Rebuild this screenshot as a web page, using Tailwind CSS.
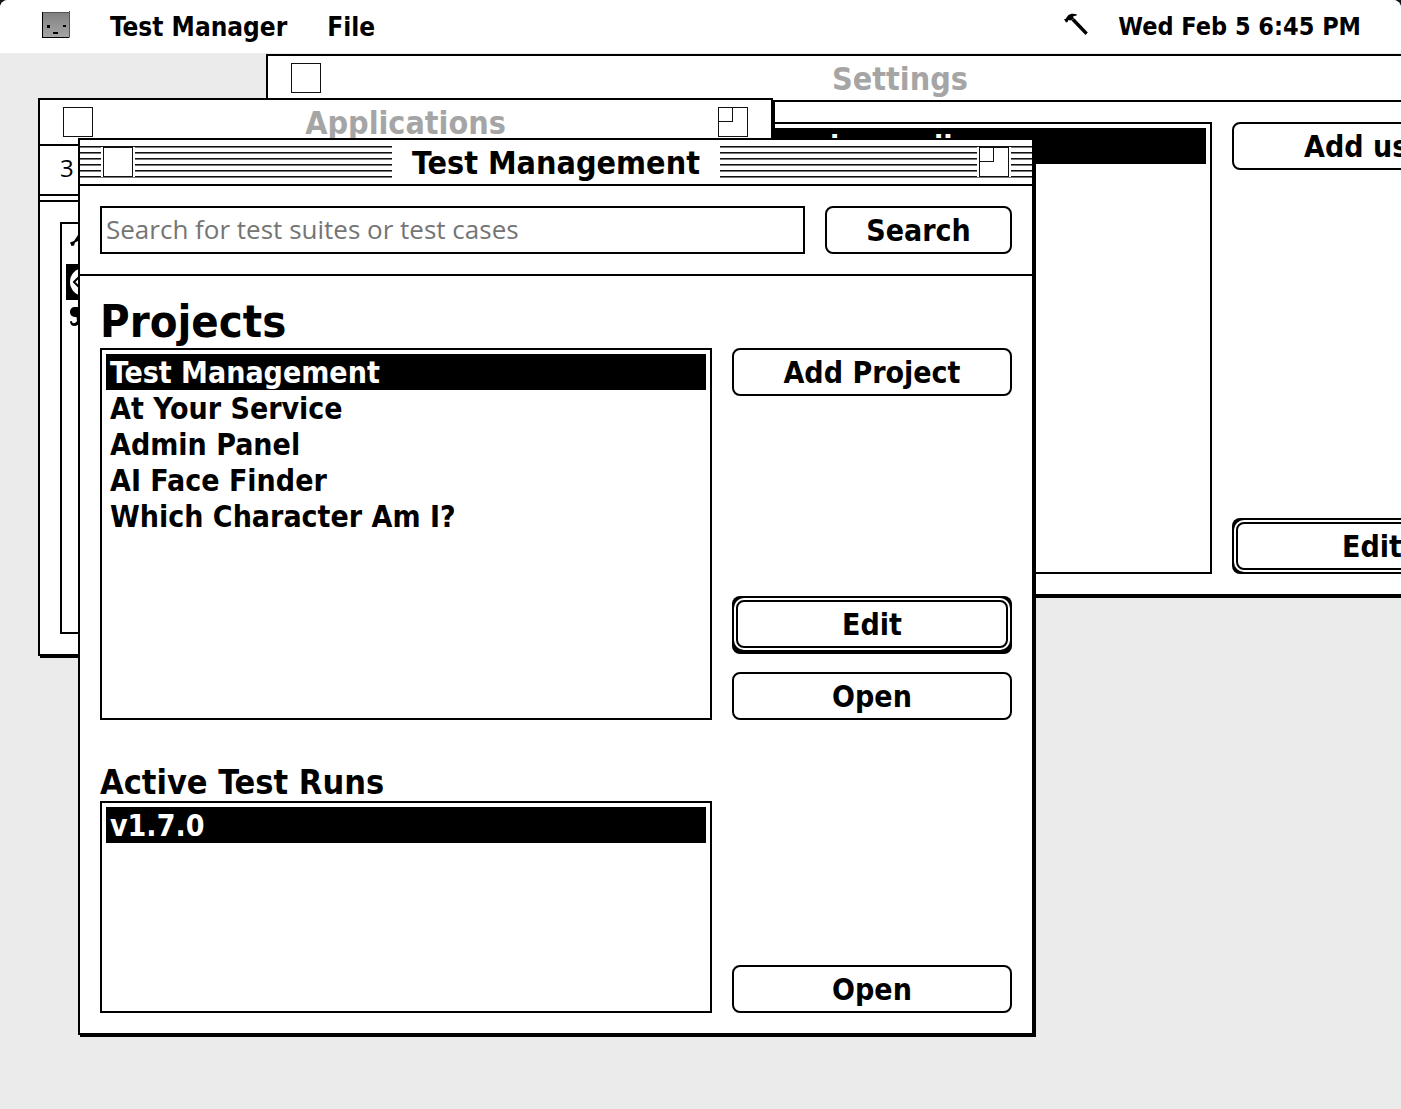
<!DOCTYPE html>
<html lang="en">
<head>
<meta charset="utf-8">
<title>Test Manager</title>
<script src="https://cdn.jsdelivr.net/npm/@tailwindcss/browser@4"></script>
</head>
<body class="bg-[#14141c]">
<div class="relative min-h-screen overflow-hidden rounded-t-lg bg-[#ebebeb] font-['DejaVu_Sans_Condensed','DejaVu_Sans',sans-serif] text-[30px] leading-[38px] font-bold text-black">

  <header class="flex h-[53px] items-center bg-white pr-10 pl-[42px] text-[26px]">
    <svg class="mr-10 mb-1 h-7 w-7" viewBox="0 0 28 28" aria-hidden="true">
      <defs><linearGradient id="face" x1="0" y1="0" x2="0" y2="1"><stop offset="0" stop-color="#808080"/><stop offset="1" stop-color="#a6a6a6"/></linearGradient></defs>
      <rect x="0" y="1" width="28" height="26" fill="url(#face)"/>
      <path d="M.5 1v26M0 26.500h27" stroke="#000" fill="none"/>
      <path d="M27.500 0v26M1 1.500h26" stroke="#555" fill="none"/>
      <path d="M5 14h3v3H5zM21 14h3v2h-3zM11 21h5v2h-5z" fill="#000"/>
    </svg>
    <nav class="flex gap-10">
      <button type="button">Test Manager</button>
      <button type="button">File</button>
    </nav>
    <div class="ml-auto flex items-center gap-[30px]">
      <svg class="mb-1 h-6 w-6" viewBox="0 0 24 24" aria-hidden="true">
        <path d="M0 6 1.500 6 4 2.500C6 .5 10 .5 13 1.500L12.500 2.500 9 3.500 10 6 6.500 7.500 4.500 7 3.500 9 2 9.500z"/>
        <path d="M7.500 7.500 10.500 5.500 23.800 19.500 21.500 22z"/>
      </svg>
      <time class="text-[25px]">Wed Feb 5 6:45 PM</time>
    </div>
  </header>

  <section aria-label="Settings" class="absolute top-[54px] left-[266px] w-[1268px] border-2 bg-white shadow-[2px_2px_0_#000]">
    <div class="flex h-[46px] items-center border-b-2 px-[23px]">
      <button type="button" aria-label="Close" class="h-[30px] w-[30px] border border-[#111]"></button>
      <h2 class="flex-1 pt-0.5 pr-[30px] text-center text-[32px] text-[#a5a5a5]">Settings</h2>
    </div>
    <div class="flex h-[492px] gap-5 p-5">
      <ul class="flex-1 border-2 p-1">
        <li><button type="button" class="block h-9 w-full bg-black pl-[536px] text-left text-white">i.roseell</button></li>
      </ul>
      <div class="flex w-[280px] flex-col justify-between">
        <button type="button" class="h-12 rounded-lg border-2 pt-0.5">Add user</button>
        <button type="button" class="rounded-lg bg-black p-[2px]"><span class="block rounded-[10px] bg-white p-[2px]"><span class="block h-12 rounded-lg border-2 leading-[46px]">Edit</span></span></button>
      </div>
    </div>
  </section>

  <section aria-label="Applications" class="absolute top-[98px] left-[38px] w-[735px] border-2 bg-white shadow-[2px_2px_0_#000]">
    <div class="flex h-[46px] items-center border-b-2 px-[23px]">
      <button type="button" aria-label="Close" class="h-[30px] w-[30px] border border-[#111]"></button>
      <h2 class="flex-1 pt-0.5 text-center text-[32px] text-[#a5a5a5]">Applications</h2>
      <button type="button" aria-label="Zoom" class="flex h-[30px] w-[30px] items-start border border-[#111]"><span class="block h-3.5 w-3.5 border-r border-b border-[#111]"></span></button>
    </div>
    <div class="flex h-[50px] items-center border-b-2 px-5 pb-1 font-['Open_Sans',sans-serif] text-[24px] font-normal">3</div>
    <div class="h-1.5 border-b-2"></div>
    <div class="h-[452px] p-5">
      <ul class="h-full border-2 p-1">
        <li class="flex h-9 items-center pl-1">
          <svg class="h-6 w-6" viewBox="0 0 24 24" aria-hidden="true"><path d="M0 8.500 4 7 8 1H16V8L8 7 5 8.500 4 11.500 1.500 12z"/></svg>
        </li>
        <li class="flex h-9 items-center bg-black pl-1">
          <svg class="h-7 w-7" viewBox="0 0 28 28" aria-hidden="true"><circle cx="14" cy="14" r="14" fill="#fff"/><path d="M9 9l-5 5 5 5" fill="none" stroke="#000" stroke-width="2"/></svg>
        </li>
        <li class="flex h-9 items-center pl-1">
          <svg class="h-6 w-6" viewBox="0 0 24 24" aria-hidden="true"><path d="M0 6C0 3 2 1 5 1H12V14C10 18 7 20 4 20 1 20 0 17 0 15.500L2 15C2 18 5 18 7 15L6.500 11C2 11 0 9 0 6z"/></svg>
        </li>
      </ul>
    </div>
  </section>

  <main aria-label="Test Management" class="absolute top-[138px] left-[78px] w-[956px] border-2 bg-white shadow-[2px_2px_0_#000]">
    <div class="flex h-[46px] items-center border-b-2">
      <div class="flex h-8 flex-1 items-center bg-[repeating-linear-gradient(#111_0_1px,#777_1px_2px,#fff_2px_6px)]">
        <div class="ml-[21px] bg-white px-0.5"><button type="button" aria-label="Close" class="block h-[30px] w-[30px] border border-[#111]"></button></div>
      </div>
      <h1 class="px-5 pt-0.5 text-[32px]">Test Management</h1>
      <div class="flex h-8 flex-1 items-center justify-end bg-[repeating-linear-gradient(#111_0_1px,#777_1px_2px,#fff_2px_6px)]">
        <div class="mr-[21px] bg-white px-0.5"><button type="button" aria-label="Zoom" class="flex h-[30px] w-[30px] items-start border border-[#111]"><span class="block h-3.5 w-3.5 border-r border-b border-[#111]"></span></button></div>
      </div>
    </div>

    <form class="flex gap-5 border-b-2 p-5">
      <input type="search" aria-label="Search" placeholder="Search for test suites or test cases" class="h-12 min-w-0 flex-1 border-2 px-1 pb-0.5 font-['Open_Sans',sans-serif] text-[26px] font-normal placeholder:text-[#757575]">
      <button type="button" class="h-12 w-[187px] rounded-lg border-2 pt-0.5">Search</button>
    </form>

    <section class="px-5 pt-[22px]">
      <h2 class="pb-0.5 text-[45px] leading-[48px]">Projects</h2>
      <div class="flex h-[372px] gap-5">
        <ul class="flex-1 border-2 p-1">
          <li><button type="button" class="block h-9 w-full bg-black px-1 text-left text-white">Test Management</button></li>
          <li><button type="button" class="block h-9 w-full px-1 text-left">At Your Service</button></li>
          <li><button type="button" class="block h-9 w-full px-1 text-left">Admin Panel</button></li>
          <li><button type="button" class="block h-9 w-full px-1 text-left">AI Face Finder</button></li>
          <li><button type="button" class="block h-9 w-full px-1 text-left">Which Character Am I?</button></li>
        </ul>
        <div class="flex w-[280px] flex-col gap-5">
          <button type="button" class="mb-auto h-12 rounded-lg border-2 pt-0.5">Add Project</button>
          <button type="button" class="rounded-lg bg-black p-[2px] shadow-[0_2px_0_#000]"><span class="block rounded-[10px] bg-white p-[2px]"><span class="block h-12 rounded-lg border-2 leading-[46px]">Edit</span></span></button>
          <button type="button" class="h-12 rounded-lg border-2 pt-0.5">Open</button>
        </div>
      </div>
    </section>

    <section class="px-5 pt-[43px] pb-5">
      <h2 class="text-[34px]">Active Test Runs</h2>
      <div class="flex h-[212px] gap-5">
        <ul class="flex-1 border-2 p-1">
          <li><button type="button" class="block h-9 w-full bg-black px-1 text-left text-white">v1.7.0</button></li>
        </ul>
        <div class="flex w-[280px] flex-col justify-end">
          <button type="button" class="h-12 rounded-lg border-2 pt-0.5">Open</button>
        </div>
      </div>
    </section>
  </main>
</div>
</body>
</html>
